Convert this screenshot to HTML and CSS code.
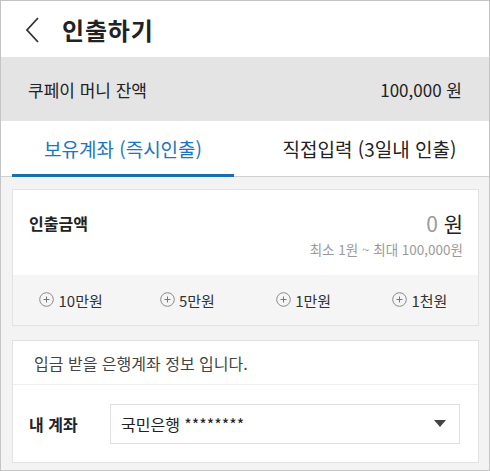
FILE: index.html
```html
<!DOCTYPE html>
<html lang="ko">
<head>
<meta charset="utf-8">
<link rel="stylesheet" href="styles.css">
</head>
<body>
<div class="app">
  <header class="header">
    <svg class="back" width="16" height="28" viewBox="0 0 16 28"><polyline points="13,2 2,14 13,26" fill="none" stroke="#333" stroke-width="1.8"/></svg>
    <h1 class="title">인출하기</h1>
  </header>
  <div class="balance">
    <span>쿠페이 머니 잔액</span>
    <span>100,000 원</span>
  </div>
  <nav class="tabs">
    <div class="tab active">보유계좌 (즉시인출)</div>
    <div class="tab second">직접입력 (3일내 인출)</div>
  </nav>
  <main class="content">
    <section class="card">
      <div class="amount">
        <div class="amount-label">인출금액</div>
        <div class="amount-right">
          <div class="amount-value"><span class="zero">0</span> <span class="won">원</span></div>
          <div class="amount-range">최소 1원 ~ 최대 100,000원</div>
        </div>
      </div>
      <div class="quick">
        <div class="qbtn"><svg class="plus" width="15" height="15" viewBox="0 0 15 15"><circle cx="7.5" cy="7.5" r="6.8" fill="none" stroke="#8a8a8a" stroke-width="1"/><path d="M7.5 4.5v6M4.5 7.5h6" stroke="#777" stroke-width="1"/></svg>10만원</div>
        <div class="qbtn"><svg class="plus" width="15" height="15" viewBox="0 0 15 15"><circle cx="7.5" cy="7.5" r="6.8" fill="none" stroke="#8a8a8a" stroke-width="1"/><path d="M7.5 4.5v6M4.5 7.5h6" stroke="#777" stroke-width="1"/></svg>5만원</div>
        <div class="qbtn"><svg class="plus" width="15" height="15" viewBox="0 0 15 15"><circle cx="7.5" cy="7.5" r="6.8" fill="none" stroke="#8a8a8a" stroke-width="1"/><path d="M7.5 4.5v6M4.5 7.5h6" stroke="#777" stroke-width="1"/></svg>1만원</div>
        <div class="qbtn"><svg class="plus" width="15" height="15" viewBox="0 0 15 15"><circle cx="7.5" cy="7.5" r="6.8" fill="none" stroke="#8a8a8a" stroke-width="1"/><path d="M7.5 4.5v6M4.5 7.5h6" stroke="#777" stroke-width="1"/></svg>1천원</div>
      </div>
    </section>
    <section class="card">
      <div class="info">입금 받을 은행계좌 정보 입니다.</div>
      <div class="account">
        <div class="account-label">내 계좌</div>
        <div class="select">
          <span>국민은행 ********</span>
          <span class="caret"></span>
        </div>
      </div>
    </section>
  </main>
</div>
</body>
</html>
```

FILE: styles.css
```css
* { box-sizing: border-box; margin: 0; padding: 0; }
html, body { height: 100%; }
body {
  font-family: "Noto Sans CJK KR", "Noto Sans", sans-serif;
  color: #222;
  background: #fff;
}
.app {
  height: 471px;
  border: 1px solid #c4c4c4;
  display: flex;
  flex-direction: column;
  overflow: hidden;
}
.header {
  height: 56px;
  display: flex;
  align-items: center;
  padding-left: 24px;
  background: #fff;
}
.back { margin-right: 21px; margin-top: 1px; }
.title {
  font-size: 24px;
  font-weight: 700;
  color: #222;
  letter-spacing: 0.8px;
}
.balance {
  height: 64px;
  background: #e4e4e4;
  display: flex;
  justify-content: space-between;
  align-items: center;
  padding: 0 27px 0 27px;
  font-size: 17px;
  color: #222;
}
.tabs {
  height: 56px;
  display: flex;
  border-bottom: 1px solid #cfcfcf;
  padding: 0 10px 0 11px;
  background: #fff;
}
.tab {
  display: flex;
  align-items: center;
  justify-content: center;
  font-size: 19px;
  color: #222;
  position: relative;
}
.tab.active { width: 222px; color: #1a76bd; }
.tab.second { flex: 1; margin-left: 26px; }
.tab.active::after {
  content: "";
  position: absolute;
  left: 0; right: 0; bottom: -1px;
  height: 3px;
  background: #1d6fa9;
}
.content {
  flex: 1;
  background: #f3f3f3;
  padding: 12px 10px 0 11px;
  display: flex;
  flex-direction: column;
  gap: 14px;
}
.card {
  background: #fff;
  border: 1px solid #e2e2e2;
}
.amount {
  height: 85px;
  display: flex;
  justify-content: space-between;
  padding: 20px 15px 0 16px;
}
.amount-label {
  font-size: 16px;
  font-weight: 700;
  margin-top: 1px;
}
.amount-right { text-align: right; }
.amount-value { font-size: 21px; line-height: 26px; }
.zero { color: #9a9a9a; font-size: 21px; }
.won { color: #222; }
.amount-range { font-size: 13.5px; color: #9a9a9a; margin-top: 3px; }
.quick {
  height: 50px;
  background: #f5f5f5;
  display: flex;
  align-items: center;
}
.qbtn {
  flex: 1;
  display: flex;
  justify-content: center;
  align-items: center;
  font-size: 15px;
  color: #333;
}
.plus {
  margin-right: 4px;
  margin-top: -2px;
  flex: none;
}
.info {
  height: 44px;
  border-bottom: 1px solid #eeeeee;
  display: flex;
  align-items: center;
  padding-left: 21px;
  font-size: 16px;
  color: #444;
}
.account {
  height: 77px;
  display: flex;
  align-items: center;
  padding: 0 18px 0 16px;
}
.account-label {
  width: 81px;
  font-size: 16px;
  font-weight: 700;
}
.select {
  flex: 1;
  height: 40px;
  border: 1px solid #e0e0e0;
  display: flex;
  justify-content: space-between;
  align-items: center;
  padding: 0 13px 0 10px;
  font-size: 16px;
  color: #222;
}
.caret {
  width: 0; height: 0;
  border-left: 6px solid transparent;
  border-right: 6px solid transparent;
  border-top: 7px solid #444;
}
```
